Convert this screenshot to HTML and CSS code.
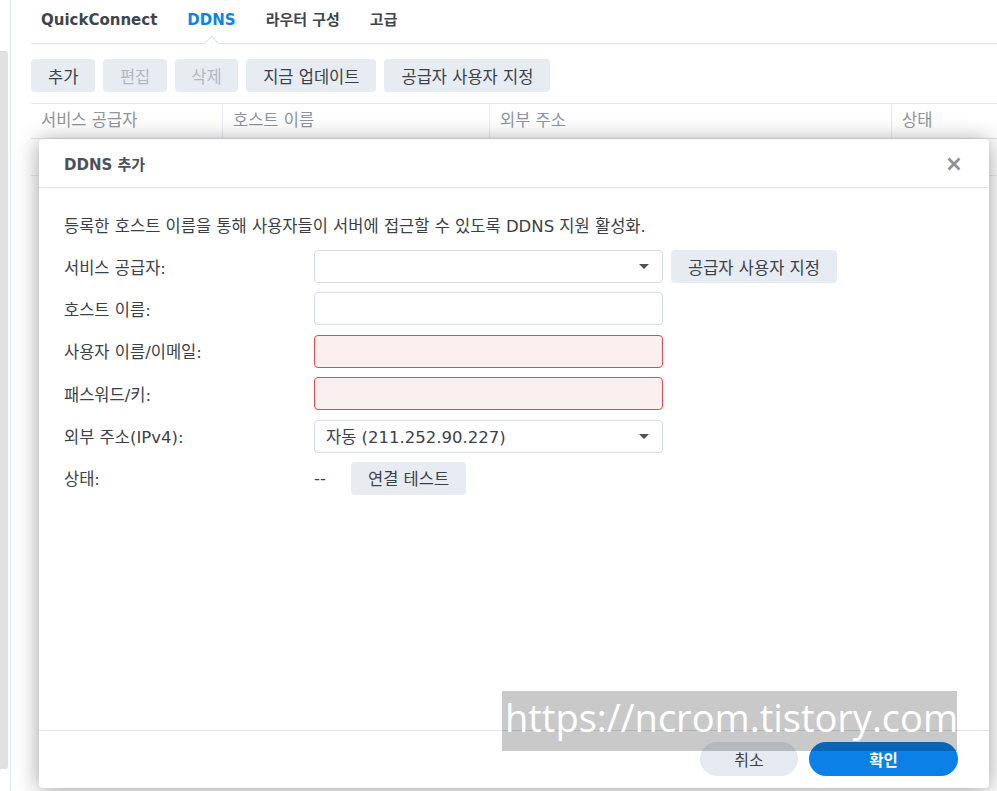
FILE: index.html
```html
<!DOCTYPE html>
<html lang="ko">
<head>
<meta charset="utf-8">
<title>DDNS</title>
<link rel="stylesheet" href="styles.css">
</head>
<body>
<div class="page">
  <aside class="side"><div class="scroll"></div></aside>
  <main class="main">
    <nav class="tabs">
      <span class="tab">QuickConnect</span>
      <span class="tab active">DDNS</span>
      <span class="tab">라우터 구성</span>
      <span class="tab">고급</span>
    </nav>
    <div class="toolbar">
      <button class="btn">추가</button>
      <button class="btn disabled">편집</button>
      <button class="btn disabled">삭제</button>
      <button class="btn">지금 업데이트</button>
      <button class="btn">공급자 사용자 지정</button>
    </div>
    <div class="grid">
      <div class="thead">
        <div class="th c1">서비스 공급자</div>
        <div class="th c2">호스트 이름</div>
        <div class="th c3">외부 주소</div>
        <div class="th c4">상태</div>
      </div>
      <div class="trow"></div>
    </div>
  </main>
</div>

<div class="dialog">
  <div class="dlg-head">
    <span class="dlg-title">DDNS 추가</span>
    <svg class="close" width="14" height="14" viewBox="0 0 14 14"><path d="M1.5 1.5 L12.5 12.5 M12.5 1.5 L1.5 12.5" stroke="#8c9299" stroke-width="2.8" stroke-linecap="butt"/></svg>
  </div>
  <div class="dlg-body">
    <p class="desc">등록한 호스트 이름을 통해 사용자들이 서버에 접근할 수 있도록 DDNS 지원 활성화.</p>
    <div class="form">
      <div class="row">
        <label class="lbl">서비스 공급자:</label>
        <div class="field select"><span class="val"></span><span class="arrow"></span></div>
        <button class="btn side-btn">공급자 사용자 지정</button>
      </div>
      <div class="row">
        <label class="lbl">호스트 이름:</label>
        <div class="field"></div>
      </div>
      <div class="row">
        <label class="lbl">사용자 이름/이메일:</label>
        <div class="field err"></div>
      </div>
      <div class="row">
        <label class="lbl">패스워드/키:</label>
        <div class="field err"></div>
      </div>
      <div class="row">
        <label class="lbl">외부 주소(IPv4):</label>
        <div class="field select"><span class="val">자동 (211.252.90.227)</span><span class="arrow"></span></div>
      </div>
      <div class="row">
        <label class="lbl">상태:</label>
        <span class="status">--</span>
        <button class="btn">연결 테스트</button>
      </div>
    </div>
  </div>
  <div class="dlg-foot">
    <button class="pill cancel">취소</button>
    <button class="pill ok">확인</button>
  </div>
</div>

<div class="watermark">https://ncrom.tistory.com</div>
</body>
</html>
```

FILE: styles.css
```css
* { box-sizing: border-box; }
html, body { margin: 0; padding: 0; }
body {
  width: 997px;
  height: 791px;
  overflow: hidden;
  background: #fff;
  font-family: "DejaVu Sans", "Noto Sans CJK KR", sans-serif;
  font-size: 16.5px;
  color: #3c4148;
  position: relative;
}
.page {
  display: flex;
  height: 791px;
}
.side {
  width: 11px;
  flex: none;
  border-right: 1px solid #dfe5ec;
}
.scroll {
  margin-top: 51px;
  width: 8px;
  height: 718px;
  background: #e1e1e1;
  border-radius: 0 3px 3px 0;
}
.main {
  flex: 1;
  padding-left: 20px;
  min-width: 0;
}
.tabs {
  display: flex;
  gap: 30px;
  height: 44px;
  padding-left: 10px;
  padding-top: 10px;
  border-bottom: 1px solid #dbe2ea;
}
.tab {
  position: relative;
  font-weight: bold;
  font-size: 15px;
  line-height: 21px;
  color: #3f454c;
  height: 33px;
}
.tab.active { color: #0b84e6; }
.tab.active::after {
  content: "";
  position: absolute;
  left: 50%;
  bottom: -6px;
  width: 10px;
  height: 10px;
  margin-left: -5px;
  background: #fff;
  border-top: 1px solid #dbe2ea;
  border-left: 1px solid #dbe2ea;
  transform: rotate(45deg);
}
.toolbar {
  display: flex;
  gap: 8px;
  margin-top: 15px;
}
.btn {
  height: 33px;
  padding: 0 17px;
  border: 0;
  border-radius: 4px;
  background: #e7ecf3;
  font: inherit;
  color: #3c4148;
  white-space: nowrap;
}
.btn.disabled { color: #b2b8c1; padding: 0 16.5px; }
.grid { margin-top: 11px; }
.thead {
  display: flex;
  height: 36px;
  border-top: 1px solid #dfe5ec;
  border-bottom: 1px solid #dfe5ec;
}
.th {
  padding: 0 10px;
  line-height: 34px;
  color: #8e949b;
  border-right: 1px solid #e6eaef;
  white-space: nowrap;
}
.c1 { width: 192px; }
.c2 { width: 267px; }
.c3 { width: 402px; }
.c4 { flex: 1; border-right: 0; }
.trow {
  height: 37px;
  border-bottom: 1px solid #e6eaef;
}

/* dialog */
.dialog {
  position: absolute;
  left: 39px;
  top: 139px;
  width: 950px;
  height: 649px;
  background: #fff;
  border-radius: 4px;
  box-shadow: 0 2px 22px rgba(0, 0, 0, 0.38);
  display: flex;
  flex-direction: column;
}
.dlg-head {
  height: 49px;
  flex: none;
  border-bottom: 1px solid #dfe5ec;
  display: flex;
  align-items: center;
  justify-content: space-between;
  padding: 1px 28px 0 25px;
}
.dlg-title {
  font-weight: bold;
  font-size: 15px;
  color: #4b5159;
}
.dlg-body {
  flex: 1;
  padding: 29px 25px 0;
}
.desc {
  margin: 0 0 13px;
  line-height: 20px;
  color: #3a3f46;
  white-space: nowrap;
}
.form {
  display: flex;
  flex-direction: column;
  gap: 9.4px;
}
.row {
  display: flex;
  align-items: center;
  height: 33px;
}
.lbl {
  width: 250px;
  flex: none;
  color: #3c4148;
}
.field {
  width: 349px;
  height: 33px;
  border: 1px solid #d6dee8;
  border-radius: 4px;
  background: #fff;
  display: flex;
  align-items: center;
  padding: 0 13px 0 11px;
}
.field.err {
  border-color: #e5484d;
  background: #fcefef;
}
.select .val { flex: 1; color: #3c4148; white-space: nowrap; }
.arrow {
  width: 0;
  height: 0;
  border-left: 5px solid transparent;
  border-right: 5px solid transparent;
  border-top: 5px solid #4d535b;
}
.side-btn { margin-left: 8px; }
.status {
  width: 37px;
  color: #3c4148;
}
.dlg-foot {
  height: 58px;
  flex: none;
  border-top: 1px solid #dfe5ec;
  display: flex;
  justify-content: flex-end;
  align-items: flex-start;
  gap: 11px;
  padding: 11px 31px 0 0;
}
.pill {
  height: 34px;
  border: 0;
  border-radius: 17px;
  font: inherit;
  font-size: 16px;
}
.cancel { width: 98px; background: #e6ebf2; color: #3c4148; }
.ok { width: 149px; background: #0b80e6; color: #fff; font-weight: bold; font-size: 15.5px; }

.watermark {
  position: absolute;
  left: 502px;
  top: 691px;
  width: 455px;
  height: 60px;
  padding-left: 3px;
  background: rgba(0, 0, 0, 0.21);
  color: #fff;
  font-family: "Open Sans", sans-serif;
  font-size: 38px;
  line-height: 52px;
  white-space: nowrap;
  overflow: hidden;
}
```
